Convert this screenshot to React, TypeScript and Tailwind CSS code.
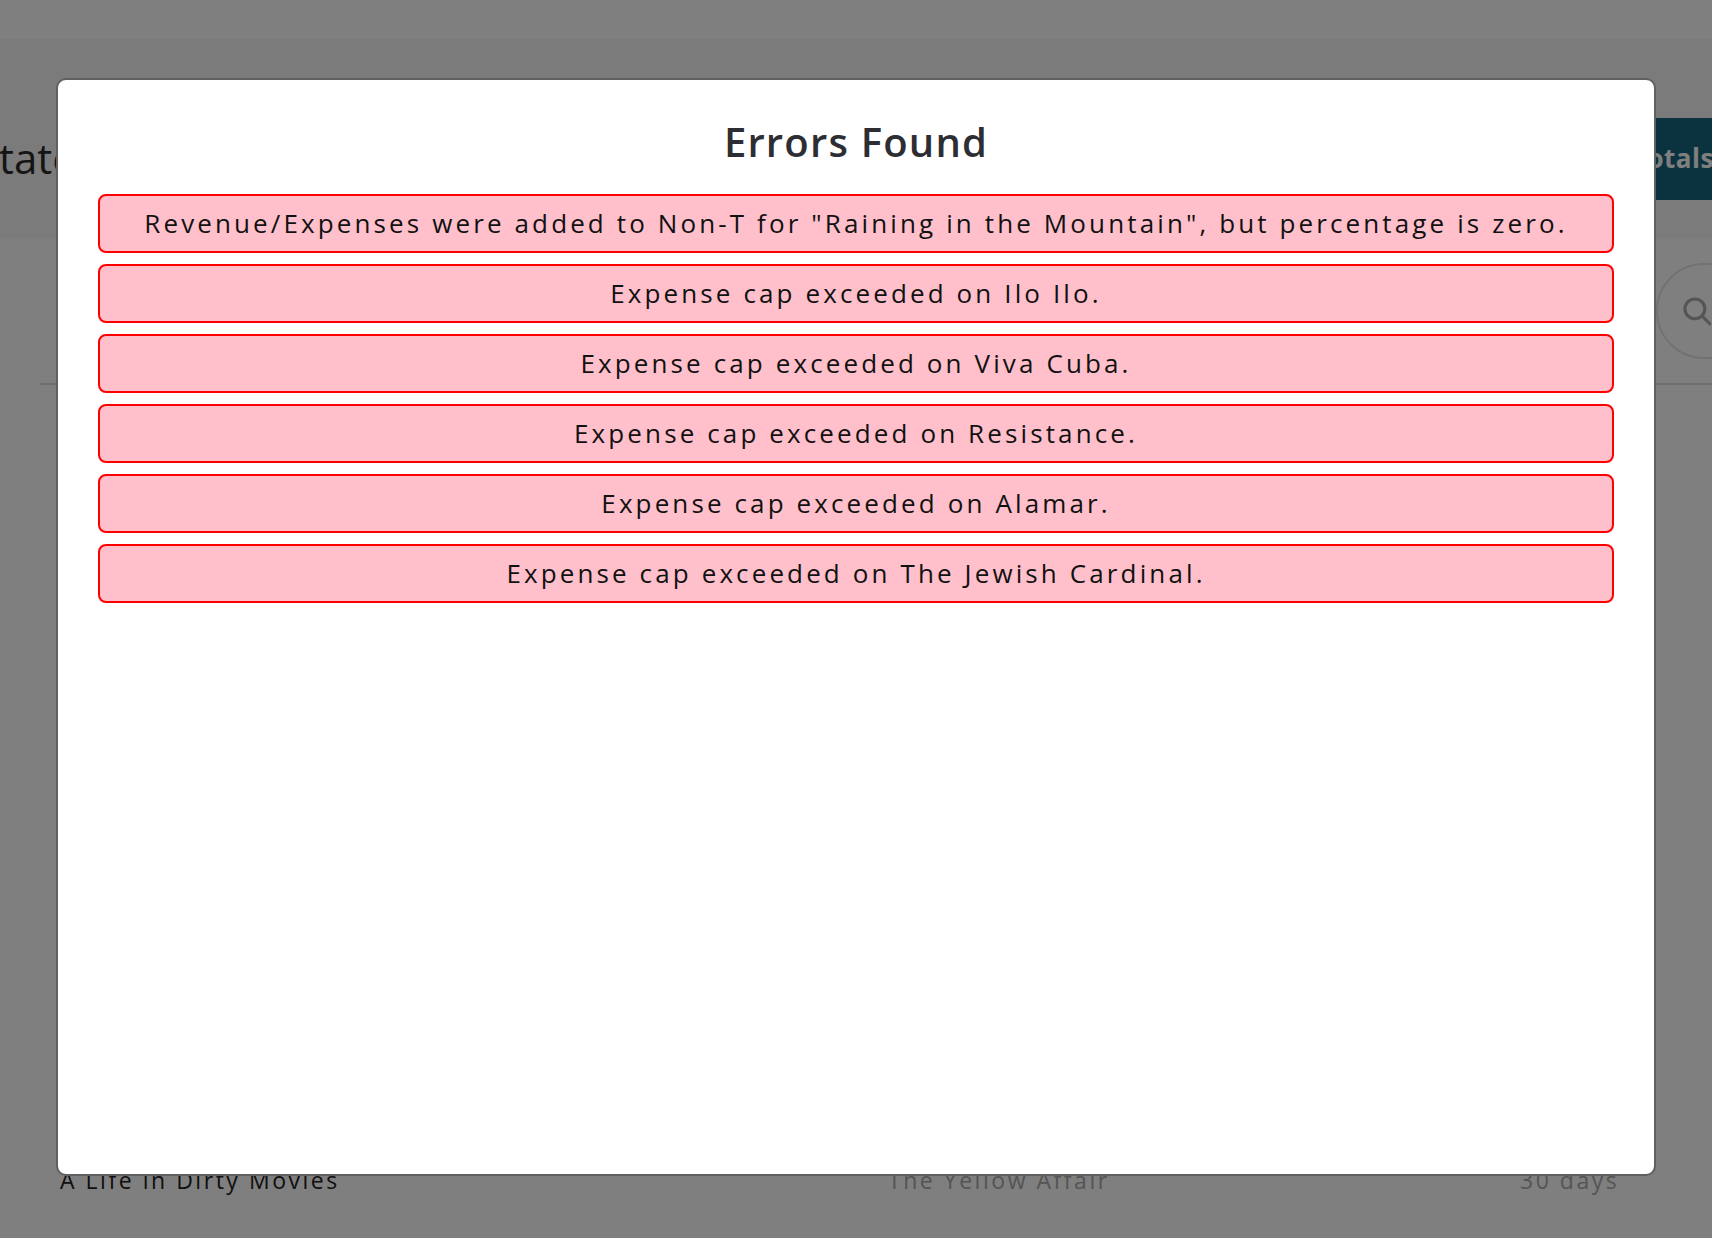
import React from 'react';

const errors = [
  'Revenue/Expenses were added to Non-T for "Raining in the Mountain", but percentage is zero.',
  'Expense cap exceeded on Ilo Ilo.',
  'Expense cap exceeded on Viva Cuba.',
  'Expense cap exceeded on Resistance.',
  'Expense cap exceeded on Alamar.',
  'Expense cap exceeded on The Jewish Cardinal.',
];

const SearchIcon = () => (
  <svg width="34" height="34" viewBox="0 0 24 24" fill="none" stroke="#aaaaaa" strokeWidth="2.2" strokeLinecap="round">
    <circle cx="10.5" cy="10.5" r="7" />
    <path d="M15.5 15.5l5.5 5.5" />
  </svg>
);

const App = () => {
  return (
    <div className="relative h-[1238px] w-[1712px] overflow-hidden bg-white font-['Open_Sans',sans-serif]">
      {/* page behind the dialog */}
      <div className="h-[39px] bg-white" />
      <div className="flex h-[199px] items-center justify-between bg-[#f6f6f6] pt-[38px]">
        <h1 className="-ml-[24px] text-[42px] leading-none text-[#2a2a2a]">Statements</h1>
        <button className="mr-[-24px] mt-[2px] h-[82px] bg-[#16677e] pl-[40px] pr-[22px] text-[26px] font-bold tracking-[0.02em] text-white">
          Show Totals
        </button>
      </div>
      <div className="ml-[40px] flex h-[147px] items-center justify-end border-b-2 border-[#dedede]">
        <div className="mr-[-74px] flex h-[96px] w-[130px] items-center rounded-full border-2 border-[#e4e4e4] pl-[22px]">
          <SearchIcon />
        </div>
      </div>
      <div className="h-[778px]" />
      <div className="grid grid-cols-[828px_632px_1fr] px-[60px] text-[23px] tracking-[0.11em]">
        <span className="text-[#222]">A Life in Dirty Movies</span>
        <span className="text-[#aaaaaa]">The Yellow Affair</span>
        <span className="text-[#aaaaaa]">30 days</span>
      </div>

      {/* overlay */}
      <div className="absolute inset-0 bg-black/50" />

      {/* dialog */}
      <div className="absolute left-[56px] top-[78px] h-[1098px] w-[1600px] rounded-[10px] border-2 border-[#606060] bg-white px-[40px] pt-[38px]">
        <h2 className="text-center text-[40px] font-semibold leading-[48px] tracking-[0.03em] text-[#2d2e33]">
          Errors Found
        </h2>
        <div className="mt-[28px] flex flex-col gap-[11px]">
          {errors.map((e) => (
            <div
              key={e}
              className="flex h-[59px] items-center justify-center rounded-[8px] border-2 border-[#ff0000] bg-[#ffc0cb] text-[26px] tracking-[0.12em] text-[#111]"
            >
              {e}
            </div>
          ))}
        </div>
      </div>
    </div>
  );
};

export default App;
